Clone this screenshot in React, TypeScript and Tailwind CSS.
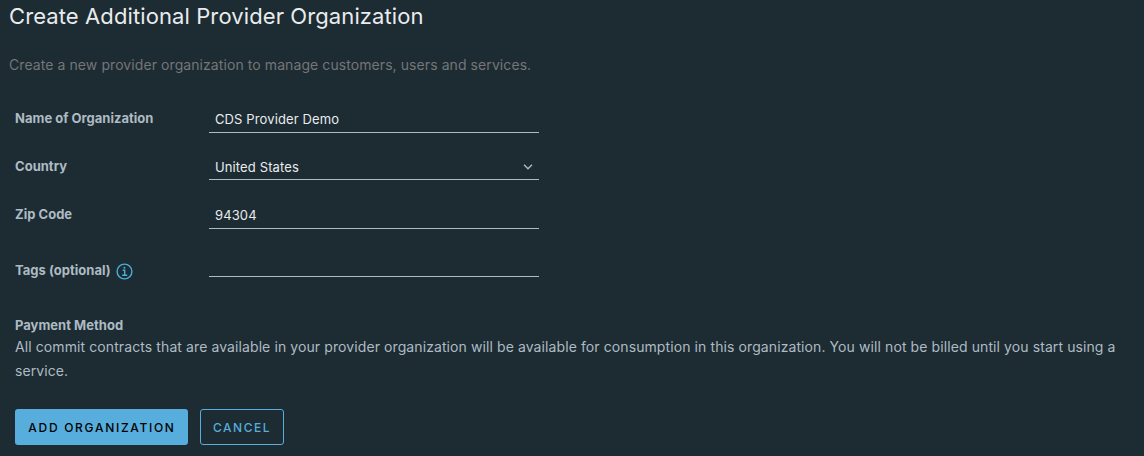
import type { ReactNode } from "react";

function Row({ label, className, children }: { label: ReactNode; className: string; children?: ReactNode }) {
  return (
    <div className={`flex w-[539px] items-start ${className}`}>
      <div className="flex h-5 w-[194px] shrink-0 items-center whitespace-nowrap text-[13px] font-bold tracking-[0.02px] text-[#adbbc4]">{label}</div>
      {children}
    </div>
  );
}

const field = "w-[330px] rounded-none border-b border-[#adbbc4] bg-transparent px-1.5 text-[13px] tracking-[0.12px] text-[#e9ecef] outline-none";

function InfoIcon() {
  return (
    <svg className="ml-[5px] mt-px size-[17px]" viewBox="0 0 17 17" fill="none" stroke="#49afd9" strokeWidth="1.4">
      <circle cx="8.5" cy="8.5" r="7.4" />
      <path d="M6.7 7.2H8.7V12M6.2 12.2H11.2" />
      <circle cx="8.4" cy="4.7" r="1" fill="#49afd9" stroke="none" />
    </svg>
  );
}

function Caret() {
  return (
    <svg className="mb-0.5 h-[6px] w-[10px]" viewBox="0 0 10 6" fill="none" stroke="#adbbc4" strokeWidth="1.4">
      <path d="M1 0.8L5 4.8L9 0.8" />
    </svg>
  );
}

export default function App() {
  return (
    <main className="h-[456px] w-[1144px] overflow-hidden bg-[#1d2b32] font-['Inter',sans-serif]">
      <h1 className="ml-[9px] h-8 w-max whitespace-nowrap text-[22px] leading-8 tracking-[0.1px] text-[#e9ecef]">Create Additional Provider Organization</h1>
      <p className="ml-[9px] mt-[21px] h-6 w-max whitespace-nowrap text-[14px] leading-6 tracking-[0.08px] text-[#747678]">
        Create a new provider organization to manage customers, users and services.
      </p>
      <form className="ml-[15px]">
        <Row label="Name of Organization" className="mt-8 h-6">
          <input className={`${field} h-6 pb-[3px]`} defaultValue="CDS Provider Demo" />
        </Row>
        <Row label="Country" className="mt-6 h-6">
          <button type="button" className={`${field} flex h-[23px] items-center justify-between`}>
            <span>United States</span>
            <Caret />
          </button>
        </Row>
        <Row label="Zip Code" className="mt-6 h-6">
          <input className={`${field} h-6 pb-[3px]`} defaultValue="94304" />
        </Row>
        <Row label={<><span>Tags (optional)</span><InfoIcon /></>} className="mt-8 h-6">
          <input className={`${field} h-4`} />
        </Row>
        <h2 className="mt-[30px] h-5 w-max text-[13px] font-bold leading-5 tracking-[0.02px] text-[#adbbc4]">Payment Method</h2>
        <div className="h-12 whitespace-nowrap text-[14px] leading-6 tracking-[0.095px] text-[#adbbc4]">
          <p className="w-max">All commit contracts that are available in your provider organization will be available for consumption in this organization. You will not be billed until you start using a</p>
          <p className="w-max">service.</p>
        </div>
        <div className="mt-[26px] flex gap-3">
          <button type="button" className="h-9 w-[173px] whitespace-nowrap rounded-[3px] bg-[#57aedc] pl-px pt-px text-[12px] font-medium tracking-[1.7px] text-black">ADD ORGANIZATION</button>
          <button type="button" className="h-9 w-[84px] whitespace-nowrap rounded-[3px] border border-[#57aedc] pt-px text-[12px] font-medium tracking-[1.5px] text-[#57aedc]">CANCEL</button>
        </div>
      </form>
    </main>
  );
}
